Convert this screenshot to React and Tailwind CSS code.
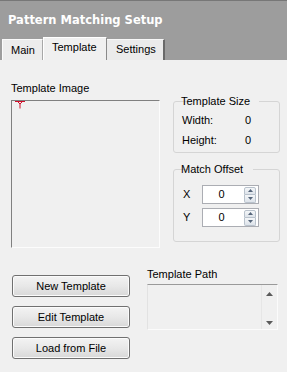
import React from 'react';

const font = { fontFamily: '"Liberation Sans", Arial, sans-serif' };

const SpinArrows = () => (
  <div className="flex flex-col w-[12px] h-[16px] my-auto mr-[2px] ml-auto">
    <div className="flex-1 flex items-center justify-center border border-[#b9c2cc] rounded-t-[2px] bg-linear-to-b from-[#f5f7f9] to-[#dde3ea]">
      <svg width="5" height="3" viewBox="0 0 5 3"><path d="M0 3 L2.5 0 L5 3 Z" fill="#55657a" /></svg>
    </div>
    <div className="flex-1 flex items-center justify-center border border-t-0 border-[#b9c2cc] rounded-b-[2px] bg-linear-to-b from-[#f5f7f9] to-[#dde3ea]">
      <svg width="5" height="3" viewBox="0 0 5 3"><path d="M0 0 L2.5 3 L5 0 Z" fill="#55657a" /></svg>
    </div>
  </div>
);

const SpinBox = ({ label, value }) => (
  <div className="flex items-center h-[19px]">
    <span className="w-[19px]">{label}</span>
    <div className="flex w-[57px] h-[19px] bg-white border border-[#abadb3]">
      <span className="w-[37px] text-center leading-[17px]">{value}</span>
      <SpinArrows />
    </div>
  </div>
);

const WinButton = ({ children }) => (
  <button className="h-[22px] w-full rounded-[3px] border border-[#707070] bg-linear-to-b from-[#f3f3f3] via-[#e8e8e8] to-[#d8d8d8] shadow-[inset_0_0_0_1px_#fbfbfb] text-[11px] text-black">
    {children}
  </button>
);

export default function App() {
  return (
    <div className="w-[287px] h-[372px] overflow-hidden text-[11px] text-black" style={font}>
      <div className="h-[60px] bg-[#9d9d9d] border-t border-[#777777] flex flex-col">
        <div className="pl-[8px] pt-[12px] text-white font-bold text-[11.5px] leading-[14px]" style={{ fontFamily: '"DejaVu Sans", Verdana, sans-serif' }}>
          Pattern Matching Setup
        </div>
        <div className="mt-auto flex items-end pl-[2px]">
          <div className="w-[41px] h-[21px] pl-[8px] pt-[4px] leading-[13px] bg-[#ececec] border-t border-l border-[#fafafa] border-r border-r-[#a8a8a8]">
            Main
          </div>
          <div className="w-[64px] h-[23px] pl-[8px] pt-[3px] leading-[13px] bg-[#f0f0f0] border-t border-l border-[#ffffff] border-r border-r-[#8a8a8a]">
            Template
          </div>
          <div className="w-[58px] h-[21px] pl-[9px] pt-[3px] leading-[13px] bg-[#ebebeb] border-t border-[#f8f8f8] border-r-2 border-r-[#6a6a6a]">
            Settings
          </div>
        </div>
      </div>

      <div className="h-[312px] bg-[#f0f0f0]">
        <div className="flex pl-[11px] pt-[22px]">
          <div className="w-[149px]">
            <div className="leading-[13px]">Template Image</div>
            <div className="relative mt-[5px] h-[148px] border-t border-l border-[#808080] border-r border-b border-r-[#fcfcfc] border-b-[#fcfcfc]">
              <svg className="absolute left-[3px] top-0" width="11" height="8" viewBox="0 0 11 8">
                <path d="M0 0.5 H10 M2.5 0.5 L5 3 L7.5 0.5 M5 3 V7.5" stroke="#d0102a" strokeWidth="1" fill="none" />
              </svg>
            </div>
          </div>

          <div className="ml-[13px] w-[107px]">
            <fieldset className="mt-[13px] border border-[#d5d5d5] rounded-[3px] pl-[8px] pt-[2px] pb-[2px]">
              <legend className="ml-[6px] px-[1px] leading-[13px] -translate-x-[8px]">Template Size</legend>
              <div className="flex leading-[20px]">
                <span className="w-[63px]">Width:</span>
                <span>0</span>
              </div>
              <div className="flex leading-[20px]">
                <span className="w-[63px]">Height:</span>
                <span>0</span>
              </div>
            </fieldset>

            <fieldset className="mt-[10px] border border-[#d5d5d5] rounded-[3px] pl-[9px] pt-[9px] pb-[14px] flex flex-col gap-[4px]">
              <legend className="ml-[6px] px-[1px] leading-[13px] -translate-x-[9px]">Match Offset</legend>
              <SpinBox label="X" value="0" />
              <SpinBox label="Y" value="0" />
            </fieldset>
          </div>
        </div>

        <div className="flex pl-[12px] mt-[20px]">
          <div className="w-[118px] mt-[7px] flex flex-col gap-[9px]">
            <WinButton>New Template</WinButton>
            <WinButton>Edit Template</WinButton>
            <WinButton>Load from File</WinButton>
          </div>
          <div className="ml-[17px] w-[131px]">
            <div className="leading-[13px]">Template Path</div>
            <div className="mt-[3px] h-[46px] flex border-t border-[#9a9a9a] border-l border-l-[#e2e2e2] border-b border-b-[#fbfbfb] border-r border-r-[#fbfbfb]">
              <div className="flex-1" />
              <div className="w-[16px] flex flex-col items-center justify-between border-l border-[#e6e6e6] pt-[7px] pb-[4px]">
                <svg width="7" height="4" viewBox="0 0 7 4"><path d="M0 4 L3.5 0 L7 4 Z" fill="#5a5a5a" /></svg>
                <svg width="7" height="4" viewBox="0 0 7 4"><path d="M0 0 L3.5 4 L7 0 Z" fill="#5a5a5a" /></svg>
              </div>
            </div>
          </div>
        </div>
      </div>
    </div>
  );
}
